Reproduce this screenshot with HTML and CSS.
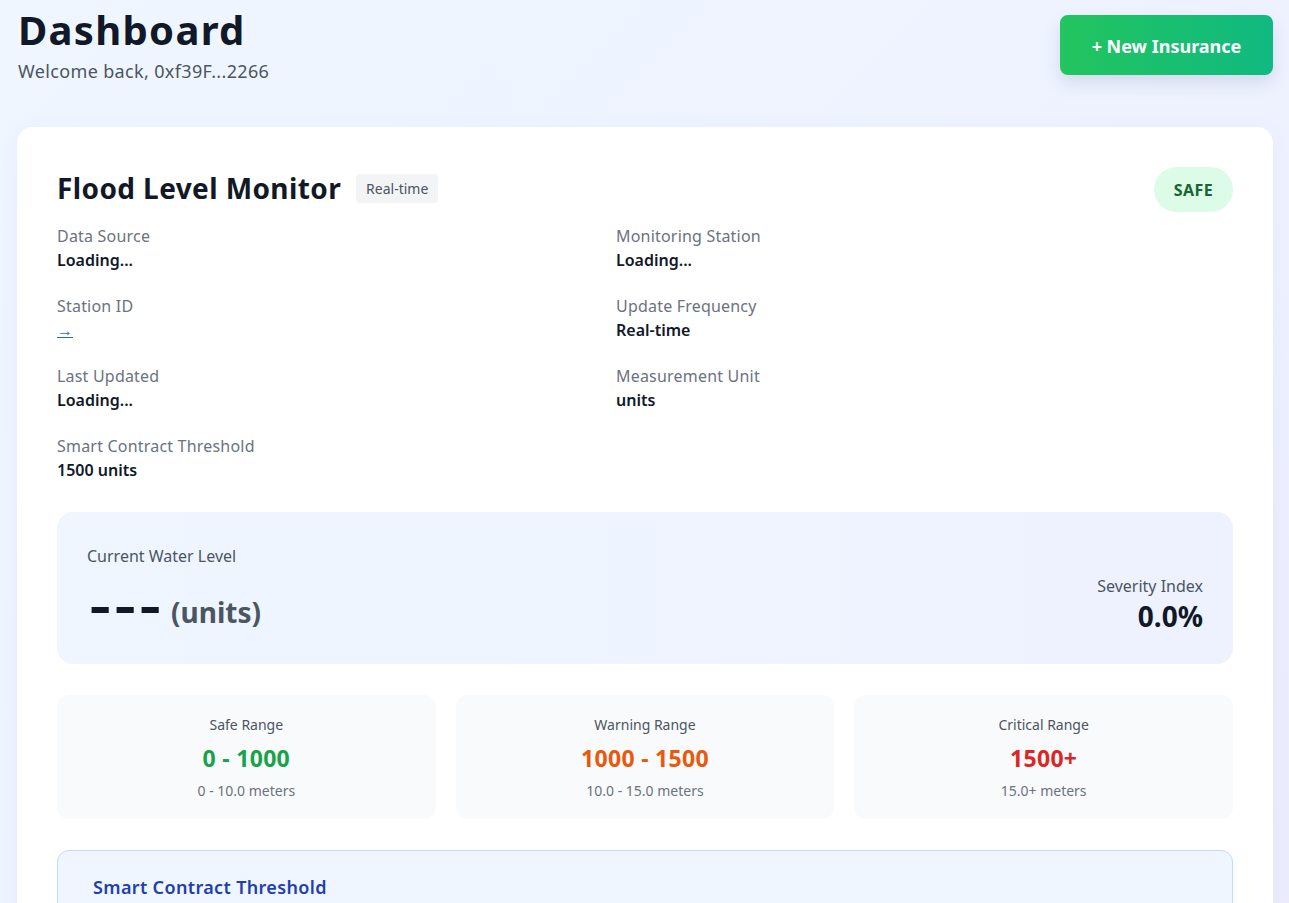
FILE: index.html
```html
<!DOCTYPE html>
<html lang="en">
<head>
<meta charset="utf-8">
<title>Dashboard</title>
<link rel="stylesheet" href="styles.css">
</head>
<body>
<div class="page">
  <header class="top">
    <div class="heading">
      <h1 class="title">Dashboard</h1>
      <p class="welcome">Welcome back, 0xf39F...2266</p>
    </div>
    <button class="new-btn">+ New Insurance</button>
  </header>

  <section class="card">
    <div class="card-head">
      <div class="head-main">
        <div class="title-row">
          <h2 class="monitor-title">Flood Level Monitor</h2>
          <span class="tag">Real-time</span>
        </div>
        <div class="info-grid">
          <div class="info">
            <div class="info-label">Data Source</div>
            <div class="info-value">Loading...</div>
          </div>
          <div class="info">
            <div class="info-label">Monitoring Station</div>
            <div class="info-value">Loading...</div>
          </div>
          <div class="info">
            <div class="info-label">Station ID</div>
            <div class="info-value"><a class="link" href="#">→</a></div>
          </div>
          <div class="info">
            <div class="info-label">Update Frequency</div>
            <div class="info-value">Real-time</div>
          </div>
          <div class="info">
            <div class="info-label">Last Updated</div>
            <div class="info-value">Loading...</div>
          </div>
          <div class="info">
            <div class="info-label">Measurement Unit</div>
            <div class="info-value">units</div>
          </div>
          <div class="info">
            <div class="info-label">Smart Contract Threshold</div>
            <div class="info-value">1500 units</div>
          </div>
        </div>
      </div>
      <span class="status">SAFE</span>
    </div>

    <div class="level-box">
      <div class="level-left">
        <div class="level-label">Current Water Level</div>
        <div class="level-value"><span class="dashes">---</span><span class="unit">(units)</span></div>
      </div>
      <div class="level-right">
        <div class="level-label">Severity Index</div>
        <div class="severity">0.0%</div>
      </div>
    </div>

    <div class="ranges">
      <div class="range">
        <div class="range-label">Safe Range</div>
        <div class="range-value green">0 - 1000</div>
        <div class="range-sub">0 - 10.0 meters</div>
      </div>
      <div class="range">
        <div class="range-label">Warning Range</div>
        <div class="range-value orange">1000 - 1500</div>
        <div class="range-sub">10.0 - 15.0 meters</div>
      </div>
      <div class="range">
        <div class="range-label">Critical Range</div>
        <div class="range-value red">1500+</div>
        <div class="range-sub">15.0+ meters</div>
      </div>
    </div>

    <div class="threshold">
      <h3 class="threshold-title">Smart Contract Threshold</h3>
      <p class="threshold-text">Payouts are triggered automatically when the water level exceeds 1500 units.</p>
    </div>
  </section>
</div>
</body>
</html>
```

FILE: styles.css
```css
* { box-sizing: border-box; }
html, body { margin: 0; padding: 0; }
body {
  font-family: "Noto Sans", "Open Sans", sans-serif;
  background: linear-gradient(135deg, #eff6ff 0%, #eef2ff 60%, #ebebfa 100%);
  min-height: 100vh;
  color: #111827;
}
.page {
  padding: 4px 16px 40px 17px;
}
.top {
  display: flex;
  justify-content: space-between;
  align-items: flex-start;
}
.heading { padding-left: 1px; }
.title {
  margin: 0;
  font-size: 40px;
  line-height: 52px;
  font-weight: 700;
  color: #111827;
  letter-spacing: 1.3px;
}
.welcome {
  margin: 0;
  font-size: 18px;
  line-height: 30px;
  color: #4b5563;
  letter-spacing: 0.35px;
}
.new-btn {
  margin-top: 11px;
  width: 213px;
  height: 60px;
  border: none;
  border-radius: 8px;
  background: linear-gradient(90deg, #22c55e, #10b981);
  color: #fff;
  font-family: inherit;
  font-size: 18px;
  font-weight: 700;
  padding-top: 2px;
  box-shadow: 0 8px 16px rgba(100, 110, 160, 0.18);
}
.card {
  margin-top: 41px;
  background: #fff;
  border-radius: 16px;
  padding: 40px 40px 40px 40px;
  box-shadow: 0 4px 20px rgba(99, 102, 241, 0.06);
}
.card-head {
  display: flex;
  justify-content: space-between;
  align-items: flex-start;
}
.head-main { flex: 1; }
.title-row {
  display: flex;
  align-items: center;
  gap: 15px;
  height: 42px;
}
.monitor-title {
  margin: 0;
  font-size: 28px;
  line-height: 42px;
  font-weight: 700;
  color: #111827;
  letter-spacing: 0.4px;
}
.tag {
  background: #f3f4f6;
  color: #4b5563;
  font-size: 14px;
  line-height: 21px;
  padding: 4px 10px;
  border-radius: 4px;
}
.status {
  background: #dcfce7;
  color: #166534;
  font-size: 16px;
  font-weight: 700;
  line-height: 47px;
  height: 45px;
  padding: 0 20px;
  border-radius: 999px;
  letter-spacing: 0.4px;
}
.info-grid {
  margin-top: 15px;
  display: grid;
  grid-template-columns: 559px 1fr;
  row-gap: 22px;
}
.info-label {
  font-size: 16px;
  line-height: 24px;
  color: #6b7280;
  letter-spacing: 0.2px;
}
.info-value {
  font-size: 16px;
  line-height: 24px;
  font-weight: 600;
  color: #111827;
}
.link {
  color: #2563eb;
  font-weight: 400;
}
.level-box {
  margin-top: 30px;
  background: linear-gradient(90deg, #eff6ff, #eef2ff);
  border-radius: 16px;
  padding: 32px 30px 30px;
  display: flex;
  justify-content: space-between;
  align-items: flex-end;
}
.level-label {
  font-size: 16px;
  line-height: 24px;
  color: #4b5563;
}
.level-value {
  margin-top: 8px;
  display: flex;
  align-items: baseline;
  gap: 7px;
  height: 58px;
}
.dashes {
  display: inline-block;
  font-size: 48px;
  line-height: 58px;
  font-weight: 700;
  color: #111827;
  letter-spacing: 3px;
  padding-left: 2px;
  transform: scaleX(1.36);
  transform-origin: left center;
  margin-right: 20px;
}
.unit {
  font-size: 28px;
  font-weight: 700;
  color: #4b5563;
}
.level-right { text-align: right; }
.severity {
  font-size: 28px;
  line-height: 36px;
  font-weight: 700;
  color: #111827;
}
.ranges {
  margin-top: 31px;
  display: grid;
  grid-template-columns: repeat(3, 1fr);
  gap: 20px;
}
.range {
  background: #f9fafb;
  border-radius: 12px;
  padding: 20px 16px 18px;
  text-align: center;
}
.range-label {
  font-size: 14px;
  line-height: 20px;
  color: #4b5563;
}
.range-value {
  margin: 7px 0;
  font-size: 23px;
  line-height: 32px;
  font-weight: 700;
  letter-spacing: 0.3px;
}
.green { color: #16a34a; }
.orange { color: #ea580c; }
.red { color: #dc2626; }
.range-sub {
  font-size: 14px;
  line-height: 20px;
  color: #6b7280;
}
.threshold {
  margin-top: 31px;
  background: #eff6ff;
  border: 1px solid #bfdbfe;
  border-radius: 12px;
  padding: 22px 35px;
}
.threshold-title {
  margin: 0;
  font-size: 18px;
  line-height: 28px;
  font-weight: 600;
  color: #1e40af;
  letter-spacing: 0.35px;
}
.threshold-text {
  margin: 8px 0 0;
  font-size: 14px;
  color: #1d4ed8;
}
```
